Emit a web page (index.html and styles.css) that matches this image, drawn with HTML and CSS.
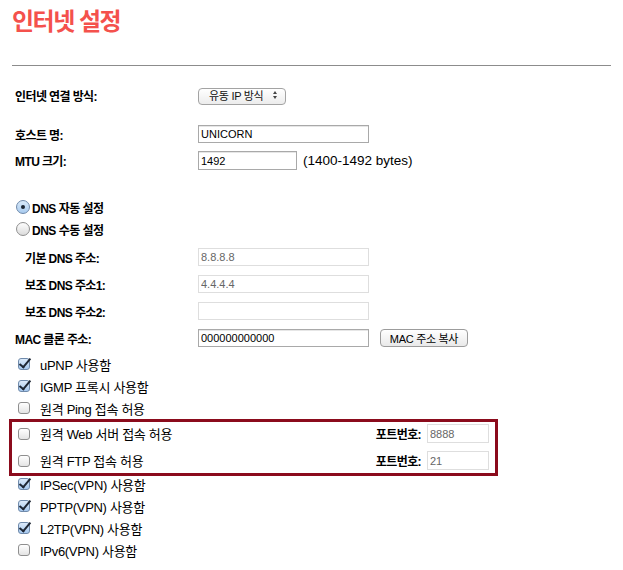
FILE: index.html
```html
<!DOCTYPE html>
<html lang="ko">
<head>
  <meta charset="UTF-8" />
  <meta name="viewport" content="width=device-width, initial-scale=1.0"/>
  <title>인터넷 설정</title>
  <link rel="stylesheet" href="styles.css">
</head>
<body>
  <div class="page">
    <h1 class="title">인터넷 설정</h1>
    <hr class="divider">

    <div class="row row-conn">
      <label class="label">인터넷 연결 방식:</label>
      <span class="select-wrap">
        <select class="select">
          <option>유동 IP 방식</option>
          <option>고정 IP 방식</option>
        </select>
      </span>
    </div>

    <div class="row row-host">
      <label class="label">호스트 명:</label>
      <input class="field" type="text" value="UNICORN">
    </div>

    <div class="row row-mtu">
      <label class="label">MTU 크기:</label>
      <input class="field field-short" type="text" value="1492">
      <span class="hint">(1400-1492 bytes)</span>
    </div>

    <div class="radio-group">
      <label class="radio-row"><input class="radio" type="radio" name="dns" checked><span>DNS 자동 설정</span></label>
      <label class="radio-row"><input class="radio" type="radio" name="dns"><span>DNS 수동 설정</span></label>
    </div>

    <div class="dns-group">
      <div class="row">
        <label class="label label-sub">기본 DNS 주소:</label>
        <input class="field" type="text" value="8.8.8.8" disabled>
      </div>
      <div class="row">
        <label class="label label-sub">보조 DNS 주소1:</label>
        <input class="field" type="text" value="4.4.4.4" disabled>
      </div>
      <div class="row">
        <label class="label label-sub">보조 DNS 주소2:</label>
        <input class="field" type="text" value="" disabled>
      </div>
      <div class="row">
        <label class="label">MAC 클론 주소:</label>
        <input class="field" type="text" value="000000000000">
        <button class="btn" type="button">MAC 주소 복사</button>
      </div>
    </div>

    <div class="options">
      <label class="check-row"><input class="check" type="checkbox" checked><span>uPNP 사용함</span></label>
      <label class="check-row"><input class="check" type="checkbox" checked><span>IGMP 프록시 사용함</span></label>
      <label class="check-row"><input class="check" type="checkbox"><span>원격 Ping 접속 허용</span></label>

      <div class="remote-box">
        <div class="port-row">
          <label class="check-row"><input class="check" type="checkbox"><span>원격 Web 서버 접속 허용</span></label>
          <span class="port-label">포트번호:</span>
          <input class="field field-port" type="text" value="8888" disabled>
        </div>
        <div class="port-row">
          <label class="check-row"><input class="check" type="checkbox"><span>원격 FTP 접속 허용</span></label>
          <span class="port-label">포트번호:</span>
          <input class="field field-port" type="text" value="21" disabled>
        </div>
      </div>

      <label class="check-row"><input class="check" type="checkbox" checked><span>IPSec(VPN) 사용함</span></label>
      <label class="check-row"><input class="check" type="checkbox" checked><span>PPTP(VPN) 사용함</span></label>
      <label class="check-row"><input class="check" type="checkbox" checked><span>L2TP(VPN) 사용함</span></label>
      <label class="check-row"><input class="check" type="checkbox"><span>IPv6(VPN) 사용함</span></label>
    </div>
  </div>
</body>
</html>
```

FILE: styles.css
```css
body {
  font-family: "Liberation Sans", "Noto Sans CJK KR", sans-serif;
  background: #fff;
  color: #000;
  margin: 0;
  padding: 0;
}
.page {
  padding: 0 12px;
}
.title {
  margin: 0;
  padding-top: 6px;
  font-size: 24px;
  line-height: 32px;
  letter-spacing: -1.5px;
  color: #f4514c;
}
.divider {
  margin: 27px 0 0;
  border: 0;
  border-top: 1px solid #8c8c8c;
  height: 0;
}
.row {
  display: flex;
  align-items: center;
  height: 18px;
  padding-left: 3px;
}
.row-conn {
  margin-top: 21px;
  height: 17px;
}
.row-host {
  margin-top: 21px;
}
.row-mtu {
  margin-top: 8px;
  height: 19px;
}
.label {
  width: 183px;
  flex: none;
  font-size: 12px;
  font-weight: bold;
  letter-spacing: -0.6px;
}
.label-sub {
  padding-left: 10px;
  box-sizing: border-box;
}
.field {
  width: 171px;
  height: 18px;
  box-sizing: border-box;
  margin: 0;
  padding: 0 2px;
  border: 1px solid #a9a9a9;
  box-shadow: inset 0 1px 0 #e6e6e6;
  font-family: "Liberation Sans", "Noto Sans CJK KR", sans-serif;
  font-size: 11px;
  color: #000;
  background: #fff;
}
.field:disabled {
  border-color: #dedede;
  box-shadow: none;
  color: #666;
}
.row-mtu .field {
  height: 19px;
}
.field-short {
  width: 99px;
}
.hint {
  margin-left: 6px;
  font-size: 13.5px;
}
.select-wrap {
  position: relative;
  display: inline-block;
}
.select {
  appearance: none;
  -webkit-appearance: none;
  width: 88px;
  height: 17px;
  margin: 0;
  padding: 0 0 0 10px;
  border: 1px solid #a3a3a3;
  border-radius: 4px;
  background: linear-gradient(#ffffff, #ececec);
  font-family: "Liberation Sans", "Noto Sans CJK KR", sans-serif;
  font-size: 11px;
  letter-spacing: -0.3px;
  color: #111;
}
.select-wrap::before,
.select-wrap::after {
  content: "";
  position: absolute;
  right: 9px;
  border-left: 2.5px solid transparent;
  border-right: 2.5px solid transparent;
}
.select-wrap::before {
  top: 5px;
  border-bottom: 3px solid #444;
}
.select-wrap::after {
  top: 10px;
  border-top: 3px solid #444;
}
.radio-group {
  margin-top: 26px;
}
.radio-row {
  display: flex;
  align-items: center;
  height: 22px;
  padding-left: 4px;
  font-size: 12px;
  font-weight: bold;
  letter-spacing: -0.5px;
}
.radio {
  appearance: none;
  -webkit-appearance: none;
  width: 14px;
  height: 14px;
  margin: 0 2px 0 0;
  border: 1px solid #8f8f8f;
  border-radius: 50%;
  background: linear-gradient(#fdfdfd, #dcdcdc);
  position: relative;
}
.radio:checked {
  background: linear-gradient(#d9e9f9, #a9cbef);
  border-color: #6f8aab;
}
.radio:checked::after {
  content: "";
  position: absolute;
  left: 4px;
  top: 4px;
  width: 4px;
  height: 4px;
  border-radius: 50%;
  background: #1a2430;
}
.dns-group {
  margin-top: 8px;
  display: flex;
  flex-direction: column;
  gap: 9px;
}
.btn {
  margin: 0 0 0 11px;
  height: 18px;
  width: 88px;
  padding: 0;
  border: 1px solid #9c9c9c;
  border-radius: 4px;
  background: linear-gradient(#ffffff, #e9e9e9);
  font-family: "Liberation Sans", "Noto Sans CJK KR", sans-serif;
  font-size: 11px;
  letter-spacing: -0.3px;
  color: #000;
}
.options {
  margin-top: 6px;
}
.check-row {
  display: flex;
  align-items: center;
  height: 22px;
  padding-left: 6px;
  font-size: 13px;
  letter-spacing: -0.3px;
}
.check {
  appearance: none;
  -webkit-appearance: none;
  width: 12px;
  height: 12px;
  margin: 0 10px 0 0;
  border: 1px solid #8f8f8f;
  border-radius: 3px;
  background: linear-gradient(#ffffff, #e4e4e4);
  position: relative;
  flex: none;
}
.check:checked {
  background: linear-gradient(#dbeafa, #a6c8ee);
  border-color: #6f8aab;
}
.check:checked::after {
  content: "";
  position: absolute;
  left: 3px;
  top: -3px;
  width: 4px;
  height: 10px;
  border-right: 2.5px solid #1d2633;
  border-bottom: 2.5px solid #1d2633;
  transform: rotate(40deg);
}
.remote-box {
  margin: 0 0 -3px -3px;
  width: 489px;
  box-sizing: border-box;
  border: 3px solid #8b0b1c;
  padding: 2px 6px 3px 0;
  display: flex;
  flex-direction: column;
  gap: 8px;
}
.port-row {
  display: flex;
  align-items: center;
  height: 19px;
}
.port-row .check-row {
  flex: 1;
}
.port-label {
  font-size: 12px;
  font-weight: bold;
  letter-spacing: -0.6px;
  margin-right: 6px;
}
.field-port {
  width: 62px;
  height: 19px;
}
```
